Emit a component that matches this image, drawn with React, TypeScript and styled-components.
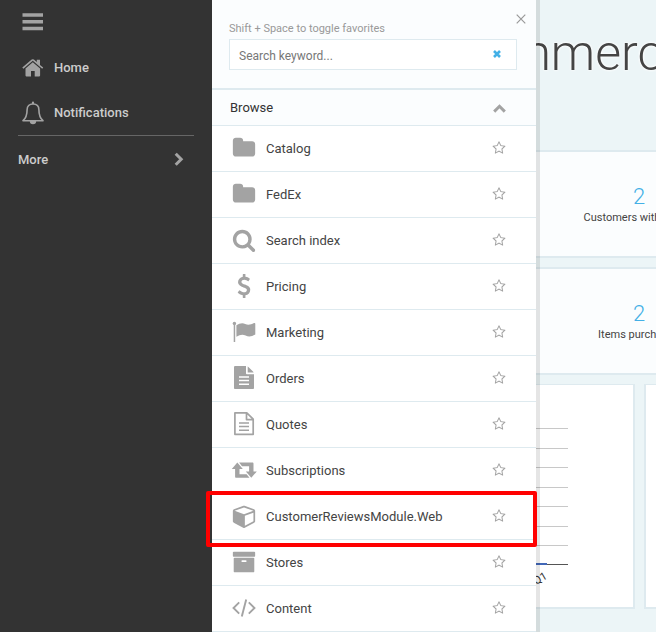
import React, { useState } from "react";
import styled, { createGlobalStyle, css } from "styled-components";

const GlobalStyle = createGlobalStyle`
  *, *::before, *::after { box-sizing: border-box; }
  body {
    margin: 0;
    overflow: hidden;
    background: #ecf5f7;
    color: #444;
    font-family: Roboto, "Liberation Sans", sans-serif;
    font-size: 14px;
  }
`;

const Shell = styled.div`
  display: flex;
  min-height: 100vh;
`;

const Sidebar = styled.nav`
  flex: 0 0 212px;
  padding: 10px 18px;
  background: #333;
`;

const plainButton = css`
  border: 0;
  padding: 0;
  background: none;
  font: inherit;
  color: inherit;
  cursor: pointer;
`;

const MenuToggle = styled.button`
  ${plainButton}
  display: flex;
  height: 24px;
  margin: 0 0 11px 4px;
  align-items: center;
`;

const NavLink = styled.a`
  display: flex;
  align-items: center;
  gap: 10px;
  height: 45px;
  padding-left: 4px;
  color: #ccc;
  font-weight: 500;
  font-size: 13px;
  text-decoration: none;
`;

const MoreButton = styled.button`
  ${plainButton}
  display: flex;
  align-items: center;
  justify-content: space-between;
  width: 100%;
  height: 47px;
  padding-right: 10px;
  border-top: 1px solid #666;
  color: #ccc;
  font-weight: 500;
  font-size: 13px;
`;

const Workspace = styled.main`
  position: relative;
  flex: 1;
  min-width: 0;
`;

const Drawer = styled.aside`
  position: absolute;
  top: 0;
  left: 0;
  width: 328px;
  min-height: 100%;
  border-right: 4px solid rgba(0, 0, 0, 0.1);
  background: #fff;
  background-clip: padding-box;
`;

const DrawerHead = styled.header`
  display: flex;
  flex-direction: column;
  height: 90px;
  padding: 21px 19px 0 17px;
  border-bottom: 2px solid #deeaef;
  background: #fbfdfe;
`;

const SearchLabel = styled.label`
  color: #999;
  font-size: 11px;
  line-height: 16px;
`;

const CloseButton = styled.button`
  ${plainButton}
  position: absolute;
  top: 14px;
  right: 10px;
  display: flex;
`;

const SearchBox = styled.div`
  display: flex;
  align-items: center;
  height: 31px;
  margin-top: 2px;
  padding: 0 15px 0 9px;
  border: 1px solid #deeaef;
  background: #fff;
`;

const SearchInput = styled.input`
  flex: 1;
  min-width: 0;
  padding: 2px 0 0;
  border: 0;
  outline: 0;
  background: none;
  color: #444;
  font: 12px/18px Roboto, "Liberation Sans", sans-serif;
  &::placeholder { color: #777; opacity: 1; }
`;

const ClearButton = styled.button`
  ${plainButton}
  display: flex;
  padding-bottom: 2px;
`;

const GroupButton = styled.button`
  ${plainButton}
  display: flex;
  align-items: center;
  justify-content: space-between;
  width: 100%;
  height: 36px;
  padding: 0 30px 0 18px;
  border-bottom: 1px solid #deeaef;
  background: #fbfdfe;
  color: #333;
  font-size: 13px;
`;

const List = styled.ul`
  margin: 0;
  padding: 0;
  list-style: none;
`;

const Row = styled.li<{ $marked?: boolean }>`
  position: relative;
  display: flex;
  align-items: center;
  height: 46px;
  padding: 0 30px 1px 20px;
  border-bottom: 1px solid #deeaef;

  ${({ $marked }) =>
    $marked &&
    css`
      &::after {
        content: "";
        position: absolute;
        z-index: 1;
        inset: -3px -1px -8px -6px;
        border: 4px solid #f00;
        border-radius: 2px;
        pointer-events: none;
      }
    `}
`;

const ItemLink = styled.a`
  display: flex;
  align-items: center;
  gap: 10px;
  flex: 1;
  color: #444;
  font-size: 13px;
  text-decoration: none;
`;

const StarButton = styled.button`
  ${plainButton}
  display: flex;
`;

const Svg = styled.svg`
  display: block;
  flex: none;
  fill: #a3a3a3;
  overflow: visible;
`;

const Dashboard = styled.div`
  display: flex;
  flex-direction: column;
  gap: 9px;
  overflow: hidden;
`;

const Banner = styled.header`
  height: 141px;
  padding: 18px 0 0 234px;
`;

const Title = styled.h1`
  margin: 0;
  color: #444;
  font-size: 50px;
  font-weight: 300;
  line-height: 70px;
  white-space: nowrap;
  text-shadow: 0 0 3px #fff, 0 0 3px #fff;
`;

const StatBand = styled.section`
  display: flex;
  height: 108px;
  padding-left: 327px;
  border: solid #deeaef;
  border-width: 2px 0;
  background: #fbfdfe;
`;

const Stat = styled.div`
  flex: 0 0 200px;
  padding-top: 30px;
  text-align: center;
`;

const StatValue = styled.div`
  color: #43b0e6;
  font-size: 22px;
  font-weight: 300;
  line-height: 29px;
`;

const StatLabel = styled.div`
  font-size: 11px;
  line-height: 14px;
`;

const Cards = styled.section`
  display: flex;
  gap: 9px;
`;

const Card = styled.article`
  flex: 0 0 423px;
  height: 225px;
  padding: 36px 0 0 280px;
  border: 2px solid #deeaef;
  border-top-width: 1px;
  background: #fff;
`;

const P: Record<string, string> = {
  folder:
    "M1728 608v704q0 92-66 158t-158 66h-1216q-92 0-158-66t-66-158v-960q0-92 66-158t158-66h320q92 0 158 66t66 158v32h672q92 0 158 66t66 158z",
  search:
    "M1216 832q0-185-131.5-316.5t-316.5-131.5-316.5 131.5-131.5 316.5 131.5 316.5 316.5 131.5 316.5-131.5 131.5-316.5zm512 832q0 52-38 90t-90 38q-54 0-90-38l-343-342q-179 124-399 124-143 0-273.5-55.5t-225-150-150-225-55.5-273.5 55.5-273.5 150-225 225-150 273.5-55.5 273.5 55.5 225 150 150 225 55.5 273.5q0 220-124 399l343 343q37 37 37 90z",
  dollar:
    "M1362 1185q0 153-99.5 263.5t-258.5 136.5v175q0 14-9 23t-23 9h-135q-13 0-22.5-9.5t-9.5-22.5v-175q-66-9-127.5-31t-101.5-44.5-74-48-46.5-37.5-17.5-18q-17-21-2-41l103-135q7-10 23-12 15-2 24 9l2 2q113 99 243 125 37 8 74 8 81 0 142.5-43t61.5-122q0-28-15-53t-33.5-42-58.5-37.5-66-32-80-32.5q-39-16-61.5-25t-61.5-26.5-62.5-31-56.5-35.5-53.5-42.5-43.5-49-35.5-58-21-66.5-8.5-78q0-138 98-242t255-134v-180q0-13 9.5-22.5t22.5-9.5h135q14 0 23 9t9 23v176q57 6 110.5 23t87 33.5 63.5 37.5 39 29 15 14q17 18 5 38l-81 146q-8 15-23 16-14 3-27-7-3-3-14.5-12t-39-26.5-58.5-32-74.5-26-85.5-11.5q-95 0-155 43t-60 111q0 26 8.5 48t29.5 41.5 39.5 33 56 31 60.5 27 70 27.5q53 20 81 31.5t76 35 75.5 42.5 62 50 53 63.5 31.5 76.5 13 94z",
  star:
    "M1201 1004l306-297-422-62-189-382-189 382-422 62 306 297-73 421 378-199 377 199zm527-357q0 22-26 48l-363 354 86 500q1 7 1 20 0 50-41 50-19 0-40-12l-449-236-449 236q-22 12-40 12-21 0-31.5-14.5t-10.5-35.5q0-6 2-20l86-500-364-354q-25-27-25-48 0-37 56-46l502-73 225-455q19-41 49-41t49 41l225 455 502 73q56 9 56 46z",
  cube:
    "M960 1629l640-349v-636l-640 233v752zm-64-865l698-254-698-254-698 254zm832-252v768q0 35-18 65t-49 47l-704 384q-28 16-61 16t-61-16l-704-384q-31-17-49-47t-18-65v-768q0-40 23-73t61-47l704-256q22-8 44-8t44 8l704 256q38 14 61 47t23 73z",
  archive:
    "M1088 832q0-26-19-45t-45-19h-256q-26 0-45 19t-19 45 19 45 45 19h256q26 0 45-19t19-45zm576-192v960q0 26-19 45t-45 19h-1408q-26 0-45-19t-19-45v-960q0-26 19-45t45-19h1408q26 0 45 19t19 45zm64-448v256q0 26-19 45t-45 19h-1536q-26 0-45-19t-19-45v-256q0-26 19-45t45-19h1536q26 0 45 19t19 45z",
};

const drawings: Record<string, React.ReactNode> = {
  flag: (
    <>
      <circle cx="2.400" cy="3.400" r="1.700" />
      <path d="M1.700 4h1.500v18H1.700z" />
      <path d="M4.400 5.300C7.200 3.600 10.200 2.400 13.200 4c3 1.600 5.700.6 8.800-.9.800-.3 1.300 0 1.300.7v10.700c-4 2.300-6.700 2.400-9.700 1-3-1.500-5.700-.9-9.200 1.200z" />
    </>
  ),
  file: (
    <path
      fillRule="evenodd"
      d="M3.300 0H14v7.300c0 .6.5 1 1.100 1H22v13.600c0 .7-.5 1.100-1.200 1.100H3.200C2.500 23 2 22.600 2 21.900V1.200C2 .5 2.600 0 3.300 0zM15.700.4c.3.100.5.3.7.500L21 5.500c.3.300.5.700.6 1.100h-5.900zM7 10.300v1.500h10v-1.500zm0 3.500v1.500h10v-1.500zm0 3.600v1.500h10v-1.500z"
    />
  ),
  fileOutline: (
    <g fill="none" stroke="#a3a3a3" strokeWidth="1.700" strokeLinejoin="round">
      <path d="M14.800.9H2.900v21.400h18.300V7.200zM14.500 1v6.600h6.600" />
      <path d="M7 11.100h10M7 14.600h10M7 18.200h10" strokeWidth="1.500" />
    </g>
  ),
  retweet: (
    <>
      <path d="M5.300 4.600l5.500 6.400H7.500v5.200h7.100l2.900 3.600H4.200c-.7 0-1.100-.4-1.100-1.100V11h-3.300z" />
      <path d="M19.300 19.800l-5.500-6.400h3.300V8.200H10L7.100 4.600h13.300c.7 0 1.100.4 1.100 1.100v7.700h3.300z" />
    </>
  ),
  code: (
    <g fill="none" stroke="#a3a3a3" strokeWidth="1.900">
      <path d="M7.200 6.300L1.500 12l5.700 5.700M16.800 6.300l5.700 5.700-5.700 5.700" />
      <path d="M14.200 3.400L9.800 20.600" />
    </g>
  ),
};

const Glyph = ({ name, size = 24 }: { name: string; size?: number }) =>
  P[name] ? (
    <Svg width={size} height={size} viewBox="0 0 1792 1792" aria-hidden="true">
      <path d={P[name]} />
    </Svg>
  ) : (
    <Svg width={size} height={size} viewBox="0 0 24 24" aria-hidden="true">
      {drawings[name]}
    </Svg>
  );

const items = [
  { icon: "folder", label: "Catalog" },
  { icon: "folder", label: "FedEx" },
  { icon: "search", label: "Search index" },
  { icon: "dollar", label: "Pricing" },
  { icon: "flag", label: "Marketing" },
  { icon: "file", label: "Orders" },
  { icon: "fileOutline", label: "Quotes" },
  { icon: "retweet", label: "Subscriptions" },
  { icon: "cube", label: "CustomerReviewsModule.Web", marked: true },
  { icon: "archive", label: "Stores" },
  { icon: "code", label: "Content" },
];

const stats = [
  { value: "2", label: "Customers with orders" },
  { value: "2", label: "Items purchased" },
];

const gridLines = [7, 27, 46, 66, 85, 105, 124];

export default function App() {
  const [keyword, setKeyword] = useState("");
  return (
    <>
      <GlobalStyle />
      <Shell>
        <Sidebar>
          <MenuToggle aria-label="Toggle menu">
            <Svg width="22" height="24" viewBox="0 0 22 24">
              <path d="M.5 3.200h20.500v3.500H.5zM.5 10h20.500v3.500H.5zM.5 16.700h20.500v3.500H.5z" />
            </Svg>
          </MenuToggle>
          <NavLink href="#home">
            <Svg width="22" height="24" viewBox="0 0 22 24">
              <path d="M10.800 6.200l7.300 6.200v7.200q0 .8-.8.8h-4.600v-5.500H9v5.500H4.300q-.8 0-.8-.8v-7.200z" />
              <path d="M.3 11.500L9.700 3.600q1.100-.8 2.200 0l2.900 2.500V3.700h3.200v5.200l3.200 2.600-1 1.200-9.400-7.900-9.400 7.900z" />
            </Svg>
            Home
          </NavLink>
          <NavLink href="#notifications">
            <Svg width="22" height="24" viewBox="0 0 22 24">
              <path
                d="M1 19.700c3.400-2.900 4.100-6.500 4.100-11C5.100 5.300 7.200 3 11 3s5.900 2.300 5.900 5.700c0 4.500.7 8.100 4.100 11z"
                fill="none"
                stroke="#a3a3a3"
                strokeWidth="1.600"
                strokeLinejoin="round"
              />
              <path d="M9.900 3V1.600a1.100 1.100 0 0 1 2.200 0V3zM7.800 20h6.400a3.200 3.200 0 0 1-6.400 0z" />
            </Svg>
            Notifications
          </NavLink>
          <MoreButton>
            More
            <Svg width="10" height="14" viewBox="0 0 10 14">
              <path d="M1.700 1.700l5.500 5.500-5.500 5.500" fill="none" stroke="#a3a3a3" strokeWidth="3" />
            </Svg>
          </MoreButton>
        </Sidebar>
        <Workspace>
          <Dashboard>
            <Banner>
              <Title>Commerce</Title>
            </Banner>
            {stats.map((s) => (
              <StatBand key={s.label}>
                <Stat>
                  <StatValue>{s.value}</StatValue>
                  <StatLabel>{s.label}</StatLabel>
                </Stat>
              </StatBand>
            ))}
            <Cards>
              <Card>
                <Svg width="76" height="170" viewBox="0 0 76 170" role="img" aria-label="Quarterly chart">
                  {gridLines.map((y) => (
                    <rect key={y} y={y} width="74" height="1" fill="#c8c8c8" />
                  ))}
                  <rect y="143" width="74" height="1" fill="#555" />
                  <rect y="142" width="53" height="2" fill="#4268b8" />
                  <text x="42" y="164" fontSize="11" fill="#333" transform="rotate(-30 42 164)">
                    Q1
                  </text>
                </Svg>
              </Card>
              <Card />
            </Cards>
          </Dashboard>
          <Drawer>
            <DrawerHead>
              <SearchLabel htmlFor="keyword">Shift + Space to toggle favorites</SearchLabel>
              <SearchBox>
                <SearchInput
                  id="keyword"
                  placeholder="Search keyword..."
                  value={keyword}
                  onChange={(e) => setKeyword(e.target.value)}
                />
                <ClearButton aria-label="Clear" onClick={() => setKeyword("")}>
                  <Svg width="8" height="8" viewBox="0 0 8 8">
                    <path d="M1 1l6 6M7 1L1 7" stroke="#43b0e6" strokeWidth="2.600" />
                  </Svg>
                </ClearButton>
              </SearchBox>
              <CloseButton aria-label="Close">
                <Svg width="10" height="10" viewBox="0 0 10 10">
                  <path d="M.7.7l8.600 8.600M9.300.7L.7 9.300" stroke="#999" strokeWidth="1.200" />
                </Svg>
              </CloseButton>
            </DrawerHead>
            <GroupButton aria-expanded="true">
              Browse
              <Svg width="13" height="9" viewBox="0 0 13 9">
                <path d="M1.200 8.600l5.300-5.300 5.300 5.300" fill="none" stroke="#a3a3a3" strokeWidth="3" />
              </Svg>
            </GroupButton>
            <List>
              {items.map((item) => (
                <Row key={item.label} $marked={item.marked}>
                  <ItemLink href="#">
                    <Glyph name={item.icon} />
                    {item.label}
                  </ItemLink>
                  <StarButton aria-label={`Add ${item.label} to favorites`}>
                    <Glyph name="star" size={14} />
                  </StarButton>
                </Row>
              ))}
            </List>
          </Drawer>
        </Workspace>
      </Shell>
    </>
  );
}
